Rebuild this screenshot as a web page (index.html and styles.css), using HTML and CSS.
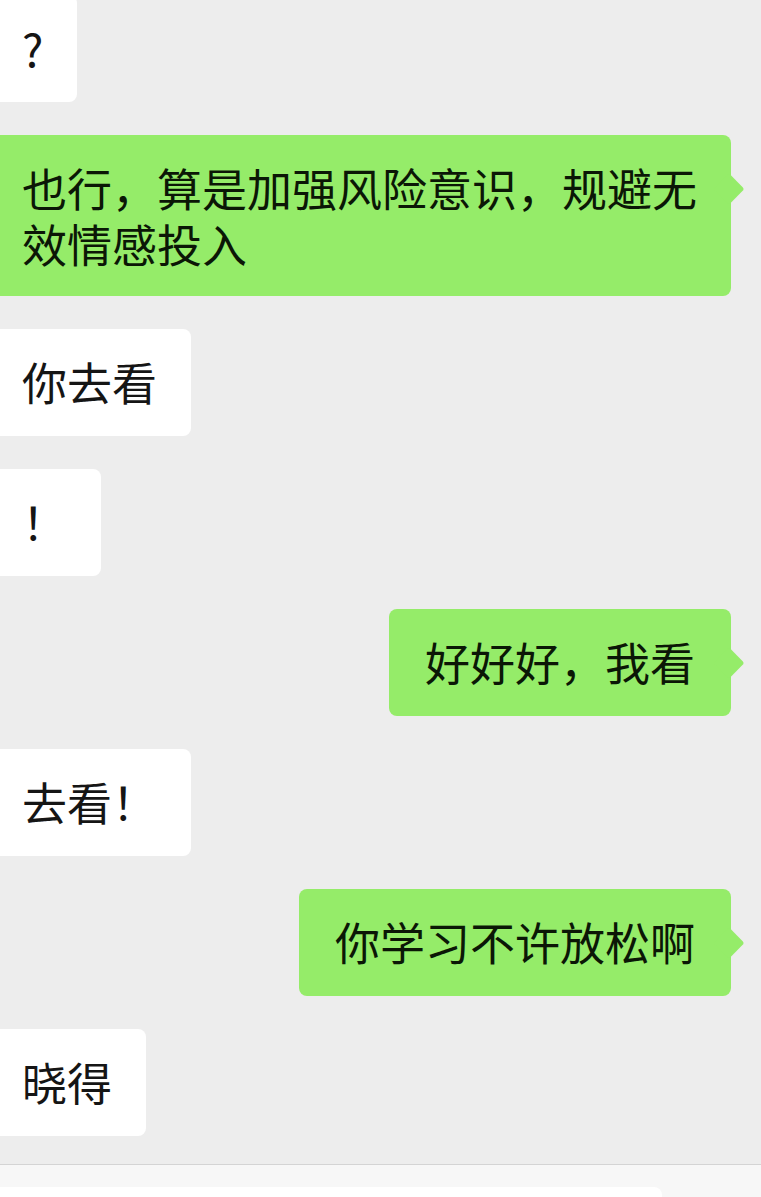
FILE: index.html
```html
<!DOCTYPE html>
<html lang="zh-CN">
<head>
    <meta charset="UTF-8">
    <meta name="viewport" content="width=device-width, initial-scale=1.0">
    <title>聊天</title>
    <link rel="stylesheet" href="styles.css">
</head>
<body>
    <div class="chat">
        <div class="row left first">
            <div class="bubble">?</div>
        </div>
        <div class="row right">
            <div class="bubble wide">也行，算是加强风险意识，规避无效情感投入</div>
            <div class="avatar"></div>
        </div>
        <div class="row left">
            <div class="bubble">你去看</div>
        </div>
        <div class="row left">
            <div class="bubble">！</div>
        </div>
        <div class="row right">
            <div class="bubble">好好好，我看</div>
            <div class="avatar"></div>
        </div>
        <div class="row left">
            <div class="bubble">去看！</div>
        </div>
        <div class="row right">
            <div class="bubble">你学习不许放松啊</div>
            <div class="avatar"></div>
        </div>
        <div class="row left">
            <div class="bubble">晓得</div>
        </div>
    </div>
    <div class="input-bar">
        <div class="input-box"></div>
    </div>
</body>
</html>
```

FILE: styles.css
```css
body {
    margin: 0;
    height: 1197px;
    overflow: hidden;
    background-color: #ededed;
    font-family: "Noto Sans CJK SC", "Noto Sans", sans-serif;
    display: flex;
    flex-direction: column;
}
.chat {
    flex: 1;
    display: flex;
    flex-direction: column;
    gap: 33px;
    overflow: hidden;
}
.row {
    display: flex;
    align-items: flex-start;
}
.row.first {
    margin-top: -5px;
}
.row.left {
    justify-content: flex-start;
}
.row.right {
    justify-content: flex-end;
    margin-right: -94px;
    gap: 30px;
}
.bubble {
    position: relative;
    font-size: 45px;
    line-height: 56px;
    color: #151515;
    background-color: #fff;
    border-radius: 0 8px 8px 0;
    padding: 25px 34px 26px 22px;
}
.row.right .bubble {
    background-color: #95ec69;
    color: #0b1706;
    border-radius: 8px;
    padding: 25px 36px 26px 36px;
}
.row.right .bubble::after {
    content: '';
    position: absolute;
    width: 22px;
    height: 22px;
    right: -9px;
    top: 43px;
    background-color: #95ec69;
    border-radius: 3px;
    transform: rotate(45deg);
}
.row.right .bubble.wide {
    flex: 1;
    border-radius: 0 8px 8px 0;
    padding-left: 22px;
    padding-right: 33px;
    padding-bottom: 24px;
}
.avatar {
    flex-shrink: 0;
    width: 94px;
    height: 94px;
    margin-top: 6px;
    border-radius: 6px;
    background: linear-gradient(#dcc3b5 0, #cfae9d 28px, #4a352b 34px, #2f221c 100%);
}
.input-bar {
    height: 10px;
    border-top: 1px solid #d4d4d4;
    background-color: #f7f7f7;
    padding-top: 22px;
}
.input-box {
    width: 662px;
    height: 10px;
    background-color: #fff;
    border-radius: 0 8px 0 0;
}
```
